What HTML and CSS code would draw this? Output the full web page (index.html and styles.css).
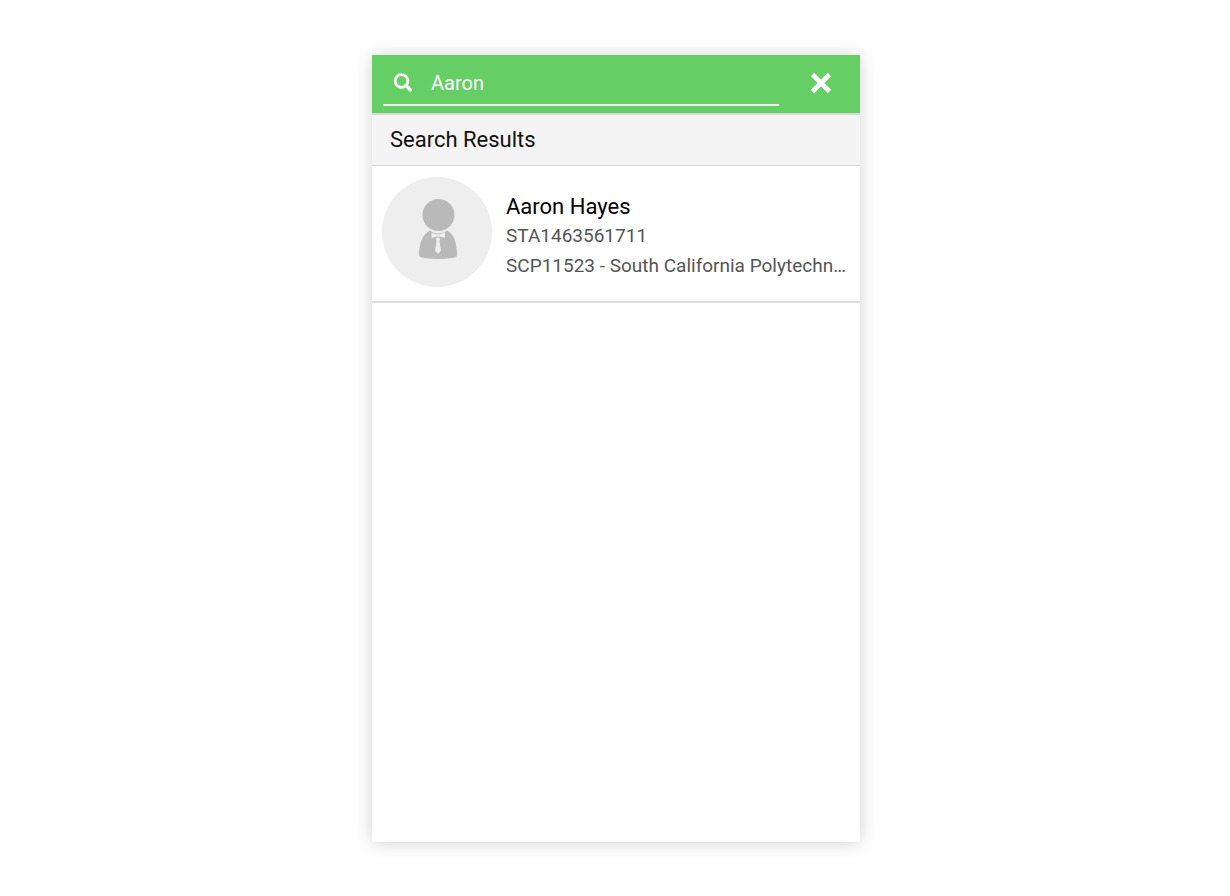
FILE: index.html
```html
<!DOCTYPE html>
<html lang="en">
<head>
  <meta charset="UTF-8" />
  <meta name="viewport" content="width=device-width, initial-scale=1.0"/>
  <title>Search Results</title>
  <link rel="stylesheet" href="styles.css">
</head>
<body>
  <main class="panel">
    <form class="search-bar" role="search">
      <div class="search-field">
        <label for="search">
          <svg class="search-icon" viewBox="0 0 20 20" role="img" aria-label="Search">
            <circle cx="8.5" cy="8" r="6.3" fill="none" stroke="#fff" stroke-width="2.8"/>
            <path d="M13 12.5L17.5 17" stroke="#fff" stroke-width="3.2" stroke-linecap="round"/>
          </svg>
        </label>
        <input type="text" id="search" value="Aaron" autocomplete="off">
      </div>
      <button type="reset" class="close-btn" aria-label="Close search">
        <svg class="close-icon" viewBox="0 0 22 22">
          <path d="M2.5 2.5L19.5 19.5M19.5 2.5L2.500 19.500" stroke="#fff" stroke-width="4.6"/>
        </svg>
      </button>
    </form>

    <h1 class="results-title">Search Results</h1>

    <ul class="results">
      <li class="result">
        <div class="avatar">
          <svg class="avatar-icon" viewBox="0 0 38 60">
            <circle cx="19.5" cy="16" r="16" fill="#b9b9b9"/>
            <path d="M11 31.500C15.500 35.500 23.500 35.500 28 31.500C34.500 34.500 38 43 38 56C38 58 36 58.500 33 59C24 60.300 14 60.300 5 59C2 58.500 0 58 0 56C0 43 4.500 34.500 11 31.500Z" fill="#b9b9b9"/>
            <path d="M12.500 33.500L18 35.500H20.500L26 33.500V39L20.500 37.500H18L12.500 39Z" fill="#eee"/>
            <path d="M17.500 38.500H20.500L21 40.500L20.400 42L22 51.500L19 55L16 51.500L17.600 42L17 40.500Z" fill="#eee"/>
          </svg>
        </div>
        <div class="details">
          <h2 class="name">Aaron Hayes</h2>
          <p>STA1463561711</p>
          <p>SCP11523 - South California Polytechnic University</p>
        </div>
      </li>
    </ul>
  </main>
</body>
</html>
```
FILE: styles.css
```css
* {
  box-sizing: border-box;
}
body {
  display: flex;
  justify-content: center;
  min-height: 100vh;
  margin: 0;
  padding: 55px 0 54px 2px;
  background: #fff;
  color: #111;
  font-family: Roboto, sans-serif;
}
.panel {
  width: 100%;
  max-width: 488px;
  background: #fff;
  box-shadow: 0 1px 16px rgba(0, 0, 0, 0.18);
}
.search-bar {
  display: flex;
  padding: 0 0 7px 11px;
  background: #65ce65;
}
.search-field {
  display: flex;
  flex: 1;
  align-items: center;
  min-width: 0;
  height: 51px;
  padding: 7px 0 0 10px;
  border-bottom: 2px solid #e8f8e8;
}
.search-field label {
  display: flex;
}
.search-icon {
  width: 20px;
  height: 20px;
}
.search-field input {
  flex: 1;
  min-width: 0;
  margin-left: 18px;
  padding: 0;
  border: none;
  outline: none;
  background: none;
  color: #fff;
  font-family: inherit;
  font-size: 20px;
}
.close-btn {
  display: flex;
  align-items: center;
  justify-content: center;
  width: 81px;
  padding: 5px 0 0 2px;
  border: none;
  background: none;
  cursor: pointer;
}
.close-icon {
  width: 22px;
  height: 22px;
}
.results-title {
  margin: 0;
  padding: 11px 18px;
  border-top: 2px solid #d8d8d8;
  border-bottom: 1px solid #d4d4d4;
  background: #f4f4f4;
  font-size: 22px;
  font-weight: 400;
  line-height: 28px;
}
.results {
  margin: 0;
  padding: 0;
  list-style: none;
}
.result {
  display: flex;
  align-items: center;
  gap: 14px;
  padding: 11px 10px 14px;
  border-bottom: 2px solid #dedede;
}
.avatar {
  display: flex;
  flex: none;
  align-items: center;
  justify-content: center;
  width: 110px;
  height: 110px;
  padding: 0 0 6px 2px;
  border-radius: 50%;
  background: #eee;
}
.avatar-icon {
  width: 38px;
  height: 60px;
}
.details {
  flex: 1;
  min-width: 0;
  padding-top: 10px;
}
.name {
  margin: 0;
  color: #000;
  font-size: 22px;
  font-weight: 400;
  line-height: 28px;
}
.details p {
  margin: 0;
  overflow: hidden;
  color: #555;
  font-size: 19px;
  line-height: 30px;
  text-overflow: ellipsis;
  white-space: nowrap;
}
```
